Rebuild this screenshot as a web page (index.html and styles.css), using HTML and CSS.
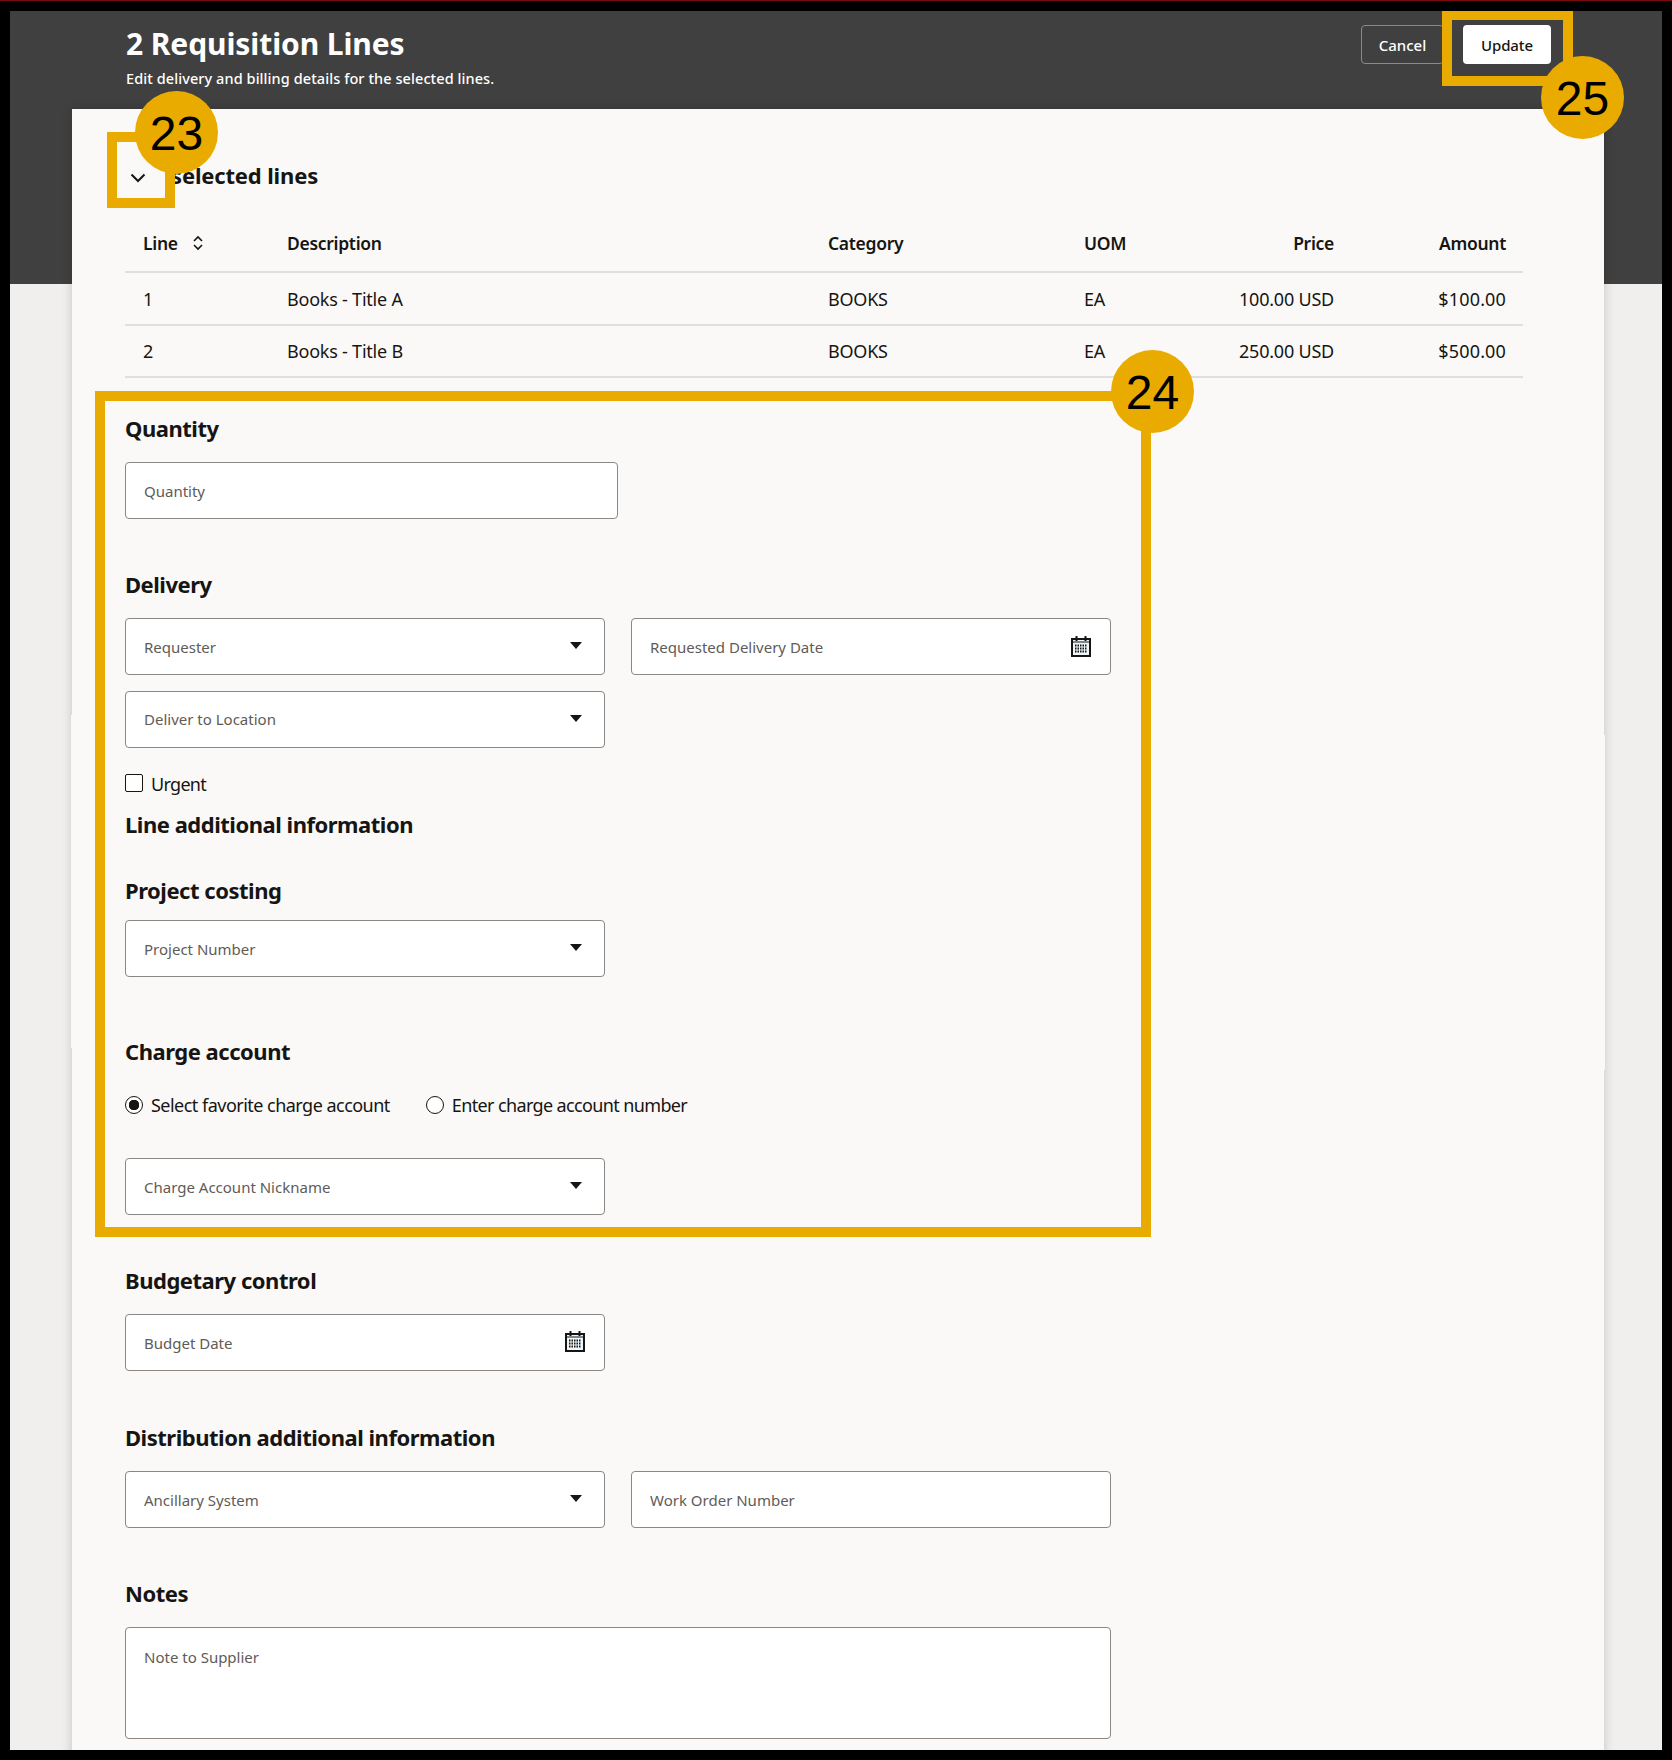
FILE: index.html
```html
<!DOCTYPE html>
<html lang="en">
<head>
<meta charset="utf-8">
<title>2 Requisition Lines</title>
<link rel="stylesheet" href="styles.css">
</head>
<body>
<div class="topline"></div>
<main class="stage">
  <header class="banner">
    <div class="banner-text">
      <h1>2 Requisition Lines</h1>
      <p>Edit delivery and billing details for the selected lines.</p>
    </div>
    <div class="banner-actions">
      <button class="btn btn-ghost">Cancel</button>
      <button class="btn btn-solid">Update</button>
    </div>
  </header>

  <section class="card">
    <span class="step step-left"></span>
    <span class="step step-right"></span>
    <div class="collapse-row">
      <svg class="chevron" viewBox="0 0 16 10" width="16" height="10"><path d="M1.5 1.5 8 8l6.500-6.500" fill="none" stroke="#161513" stroke-width="2"/></svg>
      <h2 class="collapse-title">selected lines</h2>
    </div>

    <table class="lines">
      <thead>
        <tr>
          <th class="c-line"><span class="sort-head">Line
            <svg viewBox="0 0 12 18" width="12" height="18"><path d="M2 7l4-4 4 4M2 11l4 4 4-4" fill="none" stroke="#161513" stroke-width="1.600"/></svg></span></th>
          <th class="c-desc">Description</th>
          <th class="c-cat">Category</th>
          <th class="c-uom">UOM</th>
          <th class="c-price">Price</th>
          <th class="c-amt">Amount</th>
        </tr>
      </thead>
      <tbody>
        <tr><td class="c-line">1</td><td>Books - Title A</td><td>BOOKS</td><td>EA</td><td class="c-price">100.00 USD</td><td class="c-amt">$100.00</td></tr>
        <tr><td class="c-line">2</td><td>Books - Title B</td><td>BOOKS</td><td>EA</td><td class="c-price">250.00 USD</td><td class="c-amt">$500.00</td></tr>
      </tbody>
    </table>

    <h3 class="h-quantity">Quantity</h3>
    <div class="field field-wide">Quantity</div>

    <h3 class="h-delivery">Delivery</h3>
    <div class="pair">
      <div class="field">Requester<svg class="caret" viewBox="0 0 12 7" width="12" height="7"><path d="M0 0h12L6 7z"/></svg></div>
      <div class="field">Requested Delivery Date<svg class="cal" viewBox="0 0 20 22" width="20" height="22"><use href="#cal-icon"/></svg></div>
    </div>
    <div class="pair pair-next">
      <div class="field">Deliver to Location<svg class="caret" viewBox="0 0 12 7" width="12" height="7"><path d="M0 0h12L6 7z"/></svg></div>
    </div>
    <label class="check-row"><span class="checkbox"></span>Urgent</label>

    <h3 class="h-line-info">Line additional information</h3>
    <h3 class="h-project">Project costing</h3>
    <div class="pair">
      <div class="field">Project Number<svg class="caret" viewBox="0 0 12 7" width="12" height="7"><path d="M0 0h12L6 7z"/></svg></div>
    </div>

    <h3 class="h-charge">Charge account</h3>
    <div class="radio-row">
      <label class="radio-item"><span class="radio radio-on"></span>Select favorite charge account</label>
      <label class="radio-item radio-item-tight"><span class="radio"></span>Enter charge account number</label>
    </div>
    <div class="pair">
      <div class="field">Charge Account Nickname<svg class="caret" viewBox="0 0 12 7" width="12" height="7"><path d="M0 0h12L6 7z"/></svg></div>
    </div>

    <h3 class="h-budget">Budgetary control</h3>
    <div class="pair">
      <div class="field">Budget Date<svg class="cal" viewBox="0 0 20 22" width="20" height="22"><use href="#cal-icon"/></svg></div>
    </div>

    <h3 class="h-dist">Distribution additional information</h3>
    <div class="pair">
      <div class="field">Ancillary System<svg class="caret" viewBox="0 0 12 7" width="12" height="7"><path d="M0 0h12L6 7z"/></svg></div>
      <div class="field">Work Order Number</div>
    </div>

    <h3 class="h-notes">Notes</h3>
    <div class="field field-area">Note to Supplier</div>
  </section>

  <div class="mark mark-23"></div>
  <div class="mark mark-24"></div>
  <div class="mark mark-25"></div>
  <div class="badge badge-23">23</div>
  <div class="badge badge-24">24</div>
  <div class="badge badge-25">25</div>
</main>

<svg class="defs" width="0" height="0" aria-hidden="true">
  <symbol id="cal-icon" viewBox="0 0 20 22">
    <rect x="1" y="4" width="18" height="17" fill="#eef6fb" stroke="#161513" stroke-width="2"/>
    <path d="M5.500 1v5M14.500 1v5" stroke="#161513" stroke-width="2"/>
    <path d="M2 7h16" stroke="#161513" stroke-width="1"/>
    <path d="M4 10.500h12M4 13.500h12M4 16.500h12" stroke="#161513" stroke-width="2" stroke-dasharray="1.500 1"/>
  </symbol>
</svg>
</body>
</html>
```

FILE: styles.css
```css
* { box-sizing: border-box; }

html, body {
  margin: 0;
  height: 1760px;
  overflow: hidden;
  background: #000;
}

body {
  font-family: "Noto Sans", "Open Sans", sans-serif;
  color: #161513;
}

.topline {
  height: 1px;
  background: #7d0a0a;
}

.defs { position: absolute; }

.stage {
  position: relative;
  width: 1652px;
  height: 1739px;
  margin: 10px 0 0 10px;
  background: #f1efed;
  overflow: hidden;
}

.banner {
  height: 273px;
  background: #404040;
  display: flex;
  justify-content: space-between;
  align-items: flex-start;
  padding: 14px 111px 0 116px;
  color: #fff;
}

.banner h1 {
  margin: 0;
  font-size: 30px;
  line-height: 38px;
  font-weight: 700;
  letter-spacing: -.09px;
}

.banner p {
  margin: 5px 0 0;
  font-size: 14.500px;
  line-height: 20px;
  font-weight: 500;
  letter-spacing: .08px;
}

.banner-actions {
  display: flex;
  gap: 19px;
}

.btn {
  height: 39px;
  border-radius: 4px;
  font: 500 15px "Noto Sans", sans-serif;
  padding: 0;
}

.btn-ghost {
  width: 83px;
  background: transparent;
  border: 1px solid #8a8a8a;
  color: #fff;
}

.btn-solid {
  width: 88px;
  background: #fff;
  border: 0;
  color: #161513;
  letter-spacing: -.1px;
}

.card {
  position: absolute;
  left: 62px;
  top: 98px;
  width: 1532px;
  height: 1700px;
  background: #faf9f7;
  box-shadow: 0 0 10px rgba(0, 0, 0, .18);
  padding: 0 0 0 53px;
}

.step {
  position: absolute;
  width: 1px;
  background: #faf9f7;
}

.step-left { left: -1px; top: 606px; height: 333px; }
.step-right { right: -1px; top: 626px; height: 335px; }

.collapse-row {
  height: 95px;
  position: relative;
  display: flex;
  align-items: center;
  padding-top: 37px;
}

.chevron {
  position: absolute;
  left: 5px;
  top: 64px;
}

.collapse-title {
  margin: 0 0 0 46px;
  font-size: 22px;
  line-height: 30px;
  font-weight: 700;
  letter-spacing: -.15px;
}

.lines {
  width: 1398px;
  border-collapse: collapse;
  table-layout: fixed;
  font-size: 18px;
  letter-spacing: -.22px;
}

.lines th {
  height: 68px;
  text-align: left;
  font-weight: 600;
  font-size: 17.500px;
  padding: 10px 0 0;
  border-bottom: 2px solid #e1dfdc;
  letter-spacing: -.3px;
}

.lines td {
  height: 52.500px;
  padding: 1px 0 0;
  border-bottom: 2px solid #e1dfdc;
}

.lines .c-line { width: 162px; padding-left: 18px; }
.lines .c-desc { width: 541px; }
.lines .c-cat { width: 256px; }
.lines .c-uom { width: 100px; }
.lines .c-price { width: 150px; text-align: right; }
.lines .c-amt { width: 189px; text-align: right; padding-right: 17px; }
.lines td.c-amt { letter-spacing: .15px; }

.sort-head {
  display: inline-flex;
  align-items: center;
  gap: 14px;
}

h3 {
  margin: 0;
  font-size: 22px;
  line-height: 30px;
  font-weight: 700;
  letter-spacing: -.48px;
}

.h-quantity { margin-top: 35px; margin-bottom: 19px; }
.h-delivery { margin-top: 50px; margin-bottom: 19px; }
.h-line-info { margin-top: 12px; }
.h-project { margin-top: 36px; margin-bottom: 15px; }
.h-charge { margin-top: 58.500px; margin-bottom: 0; }
.h-budget { margin-top: 50.500px; margin-bottom: 18.500px; }
.h-dist { margin-top: 51px; margin-bottom: 19px; }
.h-notes { margin-top: 50.500px; margin-bottom: 19px; }

.field {
  position: relative;
  width: 480px;
  height: 57px;
  background: #fff;
  border: 1.500px solid #8a8784;
  border-radius: 4px;
  padding: 18px 0 0 18px;
  font-size: 15px;
  line-height: 20px;
  color: #5f5b57;
}

.field-wide { width: 493px; }
.field-area { width: 986px; height: 112px; padding-top: 19px; }

.pair {
  display: flex;
  gap: 26px;
}

.pair-next { margin-top: 16px; }

.pair-next .field { padding-top: 17px; }

.caret {
  position: absolute;
  right: 22.500px;
  top: 23px;
  fill: #161513;
}

.cal {
  position: absolute;
  right: 19px;
  top: 15.500px;
}

.check-row {
  display: flex;
  align-items: center;
  gap: 8px;
  margin-top: 22px;
  height: 27px;
  font-size: 18px;
  letter-spacing: -.7px;
}

.checkbox {
  width: 18px;
  height: 18px;
  margin-top: -2px;
  border: 1.500px solid #161513;
  border-radius: 2px;
  background: #fff;
}

.radio-row {
  display: flex;
  gap: 36px;
  margin-top: 19px;
  height: 40px;
  margin-bottom: 33px;
  align-items: center;
}

.radio-item {
  display: flex;
  align-items: center;
  gap: 8px;
  font-size: 18px;
  letter-spacing: -.52px;
}

.radio-item-tight { letter-spacing: -.63px; }

.radio {
  width: 18px;
  height: 18px;
  border: 1.500px solid #161513;
  border-radius: 50%;
  background: #fff;
}

.radio-on {
  background: radial-gradient(circle, #161513 0 5px, #fff 5.500px);
}

.mark {
  position: absolute;
  border: 10px solid #eaab00;
}

.mark-23 { left: 97px; top: 121px; width: 68px; height: 76px; }
.mark-24 { left: 85px; top: 380px; width: 1056px; height: 846px; }
.mark-25 { left: 1432px; top: -1px; width: 131px; height: 76px; }

.badge {
  position: absolute;
  width: 83px;
  height: 83px;
  border-radius: 50%;
  background: #eaab00;
  color: #000;
  font: 48px/85px "Liberation Sans", Arial, sans-serif;
  text-align: center;
}

.badge-23 { left: 125px; top: 80px; }
.badge-24 { left: 1101px; top: 339px; }
.badge-25 { left: 1531px; top: 45px; }
```
